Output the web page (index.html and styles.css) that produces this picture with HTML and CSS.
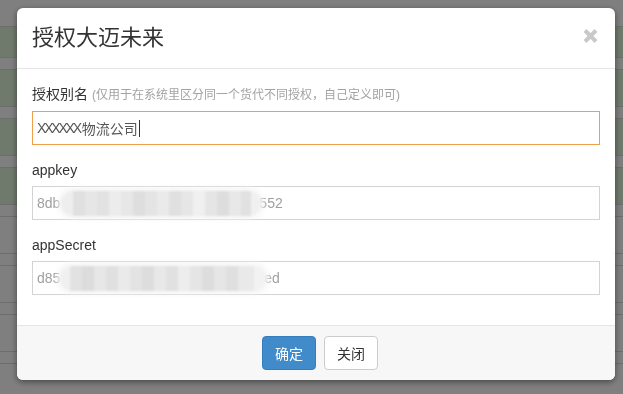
FILE: index.html
```html
<!DOCTYPE html>
<html lang="zh-CN">
<head>
  <meta charset="utf-8" />
  <meta name="viewport" content="width=device-width,initial-scale=1" />
  <title>授权大迈未来</title>
  <link rel="stylesheet" href="styles.css">
</head>
<body>
  <!-- page behind the dialog -->
  <div class="page">
    <div class="row row-first ok"></div>
    <div class="row row-sub"></div>
    <div class="row ok"></div>
    <div class="row row-sub"></div>
    <div class="row ok"></div>
    <div class="row row-sub"></div>
    <div class="row ok"></div>
    <div class="row row-sub"></div>
    <div class="row"></div>
    <div class="row row-sub"></div>
    <div class="row"></div>
    <div class="row row-sub"></div>
    <div class="row"></div>
    <div class="row row-sub"></div>
    <div class="row"></div>
  </div>

  <!-- dialog -->
  <div class="backdrop">
    <div class="modal">
      <div class="modal-header">
        <h4 class="modal-title">授权大迈未来</h4>
        <span class="close" aria-label="关闭">
          <svg width="15" height="16" viewBox="0 0 15 16"><path d="M2 2.5 L13 13.5 M13 2.5 L2 13.5" stroke="#c9c9c9" stroke-width="4" fill="none"/></svg>
        </span>
      </div>

      <div class="modal-body">
        <div class="form-group">
          <label>授权别名 <small class="hint">(仅用于在系统里区分同一个货代不同授权，自己定义即可)</small></label>
          <div class="form-control is-focus"><span class="tight">XXXXXX</span>物流公司<span class="caret"></span></div>
        </div>
        <div class="form-group">
          <label>appkey</label>
          <div class="form-control is-muted">8db<span class="mosaic"></span>552</div>
        </div>
        <div class="form-group">
          <label>appSecret</label>
          <div class="form-control is-muted">d85<span class="mosaic mosaic-b"></span>.ed</div>
        </div>
      </div>

      <div class="modal-footer">
        <button class="btn btn-primary" type="button">确定</button>
        <button class="btn btn-default" type="button">关闭</button>
      </div>
    </div>
  </div>
</body>
</html>
```

FILE: styles.css
```css
/* base */
*,*::before,*::after{box-sizing:border-box;margin:0;padding:0;}

body{
  font-family:"Liberation Sans","Noto Sans CJK SC",sans-serif;
  font-size:14px;
  color:#333;
  background:#fff;
  width:623px;height:394px;overflow:hidden;
}

/* page rows behind the backdrop */
.page{padding-top:26px;}
.row{height:37px;border-top:1px solid #dadada;background:#fff;}
.row-first{height:31px;}
.row-sub{height:12px;}
.row.ok{background:#def4da;}

/* backdrop + dialog */
.backdrop{
  position:fixed;inset:0;
  background:rgba(0,0,0,.5);
  padding:8px 0 0 17px;
}
.modal{
  width:598px;
  background:#fff;
  border-radius:6px;
  box-shadow:0 2px 6px rgba(0,0,0,.45);
}

.modal-header{
  display:flex;justify-content:space-between;align-items:center;
  padding:15px 17px 15px 15px;
  border-bottom:1px solid #e5e5e5;
}
.modal-title{font-size:22px;line-height:30px;font-weight:normal;color:#333;}
.close{display:flex;margin-top:-5px;}

.modal-body{padding:15px 15px 15px;}
.form-group{margin-bottom:15px;}
.form-group label{display:block;line-height:21px;margin-bottom:5px;font-weight:normal;}
.hint{font-size:12px;color:#a3a3a3;}

.form-control{
  display:flex;align-items:center;
  height:34px;width:100%;
  padding:0 4px;
  border:1px solid #d3d3d3;
  color:#555;
  white-space:nowrap;
}
.is-focus{border-color:#f0a048;}
.is-muted{color:#a0a0a0;}
.tight{letter-spacing:-2.2px;margin-right:2px;}
.caret{display:inline-block;width:1px;height:17px;background:#333;margin-left:1px;}

/* blurred secret */
.mosaic{
  display:inline-block;
  width:200px;height:25px;
  margin:0 -2px 0 1px;
  border-radius:12px;
  filter:blur(1px);
  box-shadow:0 0 5px 3px rgba(244,244,244,.95);
  background:linear-gradient(90deg,
    #eeeeee 0 12px,#e0e0e0 12px 24px,#e6e6e6 24px 36px,#e2e2e2 36px 48px,
    #ececec 48px 60px,#e7e7e7 60px 72px,#dedede 72px 84px,#e4e4e4 84px 96px,
    #eaeaea 96px 108px,#e0e0e0 108px 120px,#e6e6e6 120px 132px,#f0f0f0 132px 144px,
    #e5e5e5 144px 156px,#dddddd 156px 168px,#e8e8e8 168px 180px,#e1e1e1 180px 190px,#f0f0f0 190px);
}
.mosaic-b{
  width:206px;margin-left:0;margin-right:-6px;
  background:linear-gradient(90deg,
    #f0f0f0 0 10px,#e2e2e2 10px 22px,#dcdcdc 22px 34px,#e7e7e7 34px 46px,
    #e0e0e0 46px 58px,#eaeaea 58px 70px,#e3e3e3 70px 82px,#dddddd 82px 94px,
    #e8e8e8 94px 106px,#e1e1e1 106px 118px,#ededed 118px 130px,#e5e5e5 130px 142px,
    #dddddd 142px 154px,#e6e6e6 154px 166px,#dfdfdf 166px 178px,#e9e9e9 178px 194px,#f2f2f2 194px);
}

/* footer */
.modal-footer{
  display:flex;justify-content:center;gap:8px;
  padding:10px 15px 10px 23px;
  border-top:1px solid #e5e5e5;
  background:#f7f7f7;
  border-radius:0 0 6px 6px;
}
.btn{
  width:54px;height:34px;
  font:14px "Liberation Sans","Noto Sans CJK SC",sans-serif;
  border:1px solid transparent;border-radius:4px;
}
.btn-primary{background:#428bca;border-color:#357ebd;color:#fff;}
.btn-default{background:#fff;border-color:#ccc;color:#333;}
```
